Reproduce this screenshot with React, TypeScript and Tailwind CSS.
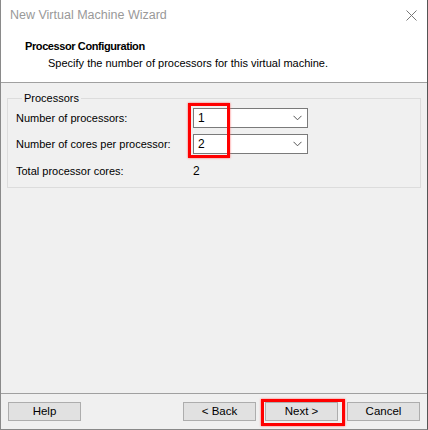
function Chevron() {
  return (
    <svg width="9" height="6" viewBox="0 0 9 6" className="text-[#555]">
      <polyline points="0.5,0.8 4.5,4.8 8.5,0.8" fill="none" stroke="currentColor" strokeWidth="1" />
    </svg>
  );
}

function Select({ value }: { value: string }) {
  return (
    <div className="flex h-[20px] w-[115px] items-center justify-between border border-[#7a7a7a] bg-white pl-[4px] pr-[5px]">
      <span className="text-[12px] text-black">{value}</span>
      <Chevron />
    </div>
  );
}

function Button({ label }: { label: string }) {
  return (
    <div className="flex h-[19px] w-[73px] items-center justify-center border border-[#adadad] bg-[#e1e1e1] text-[11.5px] text-black">
      {label}
    </div>
  );
}

export default function App() {
  return (
    <div
      className="relative flex h-[430px] w-[428px] flex-col border-b border-l border-r border-b-[#888] border-l-[#8a8a8a] border-r-[#555] bg-[#f0f0f0]"
      style={{ fontFamily: '"Liberation Sans", Arial, sans-serif' }}
    >
      {/* title bar */}
      <div className="flex h-[31px] items-center justify-between bg-white pl-[9px] pr-[10px]">
        <span className="text-[12.5px] text-[#999]">New Virtual Machine Wizard</span>
        <svg width="11" height="11" viewBox="0 0 11 11" className="text-[#777]">
          <path d="M0.5 0.5 L10.5 10.5 M10.5 0.5 L0.5 10.5" stroke="currentColor" strokeWidth="1" />
        </svg>
      </div>

      {/* header */}
      <div className="h-[52px] border-b border-[#a0a0a0] bg-white pl-[24px] pt-[7px]">
        <p className="text-[11px] font-bold leading-[16px] tracking-[-0.4px] text-black">Processor Configuration</p>
        <p className="mt-[1px] pl-[23px] text-[11px] leading-[16px] text-black">
          Specify the number of processors for this virtual machine.
        </p>
      </div>

      {/* body */}
      <div className="flex-1 px-[6px] pt-[8px]">
        <fieldset className="h-[97px] border border-[#dcdcdc] pl-[8px]">
          <legend className="ml-[6px] px-[2px] text-[11px] leading-[14px] text-black">Processors</legend>
          <div className="mt-[3px] flex flex-col gap-[6px]">
            <div className="flex items-center">
              <span className="w-[177px] text-[11px] text-black">Number of processors:</span>
              <Select value="1" />
            </div>
            <div className="flex items-center">
              <span className="w-[177px] text-[11px] text-black">Number of cores per processor:</span>
              <Select value="2" />
            </div>
            <div className="mt-[2px] flex items-center">
              <span className="w-[177px] text-[11px] text-black">Total processor cores:</span>
              <span className="text-[12px] text-black">2</span>
            </div>
          </div>
        </fieldset>
      </div>

      {/* footer */}
      <div className="h-[36px] border-t border-[#a0a0a0] pt-[8px]">
        <div className="flex items-center pl-[7px] pr-[7px]">
          <Button label="Help" />
          <div className="ml-auto flex gap-[9px]">
            <Button label="< Back" />
            <Button label="Next >" />
            <Button label="Cancel" />
          </div>
        </div>
      </div>

      {/* red annotation boxes */}
      <div className="absolute left-[187px] top-[103px] h-[55px] w-[42px] border-[3px] border-[#ff0000] shadow-[0_0_2px_#ff6060]" />
      <div className="absolute left-[260px] top-[399px] h-[27px] w-[84px] border-[3px] border-[#ff0000] shadow-[0_0_2px_#ff6060]" />
    </div>
  );
}
